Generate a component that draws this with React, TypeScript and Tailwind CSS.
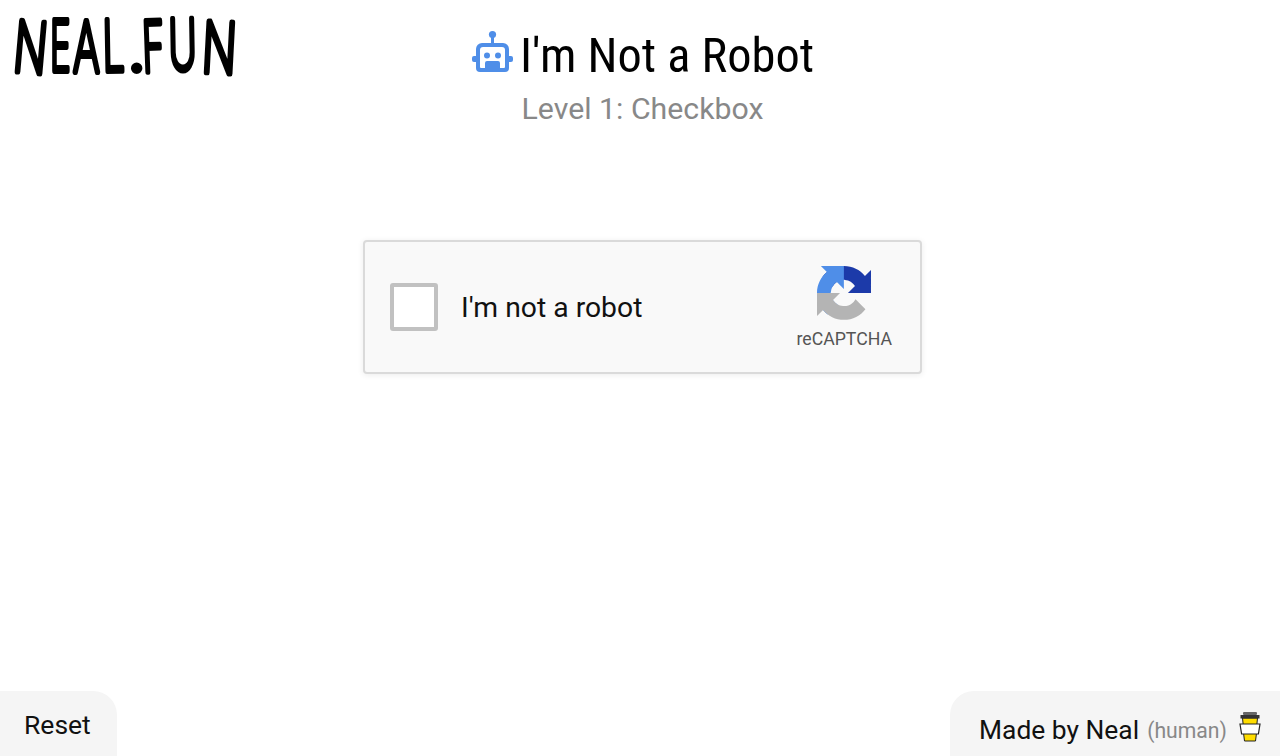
const roboto = "font-['Roboto',sans-serif]";

const letters = [
  { c: "N", x: 12, y: 71, s: 0.62, r: 5 },
  { c: "E", x: 50, y: 71, s: 0.5, r: 0 },
  { c: "A", x: 73, y: 72, s: 0.58, r: 0 },
  { c: "L", x: 103, y: 71, s: 0.56, r: -1 },
  { c: ".", x: 127, y: 71, s: 1, r: 0 },
  { c: "F", x: 143, y: 72, s: 0.54, r: -2 },
  { c: "U", x: 169, y: 70, s: 0.55, r: -1 },
  { c: "N", x: 201, y: 72, s: 0.64, r: 3 },
];

function Logo() {
  return (
    <svg width="250" height="95" viewBox="0 0 250 95" className="block overflow-visible">
      {letters.map((l, i) => (
        <text
          key={i}
          transform={`translate(${l.x} ${l.y}) rotate(${l.r}) scale(${l.s} 1)`}
          fontFamily="Inter, sans-serif"
          fontSize="70"
          fontWeight="200"
          fill="#000"
          stroke="#000"
          strokeWidth="6"
          strokeLinejoin="round"
          strokeLinecap="round"
        >
          {l.c}
        </text>
      ))}
    </svg>
  );
}

function RobotIcon() {
  return (
    <svg width="42" height="44" viewBox="0 0 42 44" className="shrink-0">
      <g fill="#4f8ee8">
        <circle cx="20.5" cy="4.5" r="3.6" />
        <rect x="19" y="6" width="3" height="8" />
        <rect x="0" y="26" width="6" height="6" rx="2" />
        <rect x="35" y="26" width="6" height="6" rx="2" />
        <path
          fillRule="evenodd"
          d="M10 13h21a6 6 0 0 1 6 6v19a4 4 0 0 1-4 4H8a4 4 0 0 1-4-4V19a6 6 0 0 1 6-6Zm1 4a3 3 0 0 0-3 3v17a1 1 0 0 0 1 1h4v-5a2 2 0 0 1 2-2h11a2 2 0 0 1 2 2v5h4a1 1 0 0 0 1-1V20a3 3 0 0 0-3-3H11Z"
        />
        <circle cx="15" cy="25.5" r="3" />
        <circle cx="26" cy="25.5" r="3" />
      </g>
    </svg>
  );
}

function RecaptchaIcon() {
  return (
    <svg width="54" height="54" viewBox="0 0 64 64" className="block">
      <path d="M64 31.955l-.033-1.37V4.687l-7.16 7.16C50.948 4.674 42.033.093 32.05.093c-10.4 0-19.622 4.96-25.458 12.64l11.736 11.86a15.55 15.55 0 0 1 4.754-5.334c2.05-1.6 4.952-2.906 8.968-2.906.485 0 .86.057 1.135.163 4.976.393 9.29 3.14 11.83 7.125l-8.308 8.308 26.3.009" fill="#1c3aa9" />
      <path d="M31.862.002l-1.37.033H4.594l7.16 7.16C4.58 13.054 0 21.97 0 31.953c0 10.4 4.96 19.622 12.64 25.458l11.86-11.736a15.55 15.55 0 0 1-5.334-4.754c-1.6-2.05-2.906-4.952-2.906-8.968 0-.485.057-.86.163-1.135.393-4.976 3.14-9.29 7.125-11.83l8.308 8.308.009-26.3" fill="#4f8ee8" />
      <path d="M.002 31.953l.033 1.37v25.898l7.16-7.16c5.86 7.173 14.774 11.754 24.76 11.754 10.4 0 19.622-4.96 25.458-12.64l-11.736-11.86a15.55 15.55 0 0 1-4.754 5.334c-2.05 1.6-4.952 2.906-8.968 2.906-.485 0-.86-.057-1.135-.163-4.976-.393-9.29-3.14-11.83-7.125l8.308-8.308-26.3-.009" fill="#b4b4b4" />
    </svg>
  );
}

function CoffeeIcon() {
  return (
    <svg width="24" height="31" viewBox="0 0 24 31" className="shrink-0">
      <path d="M4.5 7 L19.5 7 L18.8 14 L5.2 14 Z" fill="#ffdd00" stroke="#222" strokeWidth="1" />
      <path d="M5.5 22 L18.5 22 L17.5 30 L6.5 30 Z" fill="#ffdd00" stroke="#222" strokeWidth="1" />
      <path d="M2 13 L22 13 L20.4 23 L3.6 23 Z" fill="#fff" stroke="#222" strokeWidth="1.2" />
      <rect x="5" y="1" width="14" height="3" rx="1" fill="#666" />
      <rect x="2.5" y="4" width="19" height="3.5" fill="#333" />
    </svg>
  );
}

export default function App() {
  return (
    <div className={`relative flex h-[756px] w-[1280px] flex-col overflow-hidden bg-white text-black ${roboto}`}>
      <div className="absolute left-0 top-0">
        <Logo />
      </div>

      <header className="flex flex-col items-center pl-[5px] pt-[31px]">
        <div className="flex h-[50px] items-center gap-[7px]">
          <div className="translate-x-[1px] -translate-y-[4px]">
            <RobotIcon />
          </div>
          <h1 className="text-[48.4px] leading-[50px] font-normal [font-stretch:75%]">I'm Not a Robot</h1>
        </div>
        <p className="mt-[6px] text-[30.25px] leading-[44px] text-[#888888]">Level 1: Checkbox</p>
      </header>

      <main className="flex flex-1 justify-center pl-[5px] pt-[109px]">
        <div className="flex h-[134px] w-[559px] items-center rounded-[4px] border-2 border-[#dadada] bg-[#f9f9f9] pl-[25px] pr-[28px] pt-[2px] shadow-[0_1px_6px_rgba(0,0,0,0.08)]">
          <div className="-translate-y-[1px] h-[48px] w-[48px] rounded-[3px] border-4 border-[#c1c1c1] bg-white" />
          <span className="ml-[23px] flex-1 text-[28.3px] leading-[34px] text-[#111111]">I'm not a robot</span>
          <div className="flex flex-col items-center">
            <RecaptchaIcon />
            <span className="mt-[7px] text-[17.7px] leading-[24px] text-[#555555]">reCAPTCHA</span>
          </div>
        </div>
      </main>

      <footer className="flex items-end justify-between">
        <div className="flex h-[65px] w-[117px] items-center rounded-tr-[24px] bg-[#f5f5f5] pl-[24px] pt-[2px] text-[26.5px] text-[#111111]">
          Reset
        </div>
        <div className="flex h-[65px] w-[330px] items-center rounded-tl-[24px] bg-[#f5f5f5] pl-[29px] pt-[15px] text-[26.4px] text-[#111111]">
          <span>Made by Neal</span>
          <span className="ml-[8px] text-[21.2px] text-[#888888]">(human)</span>
          <span className="ml-[11px] -translate-y-[5px]">
            <CoffeeIcon />
          </span>
        </div>
      </footer>
    </div>
  );
}
